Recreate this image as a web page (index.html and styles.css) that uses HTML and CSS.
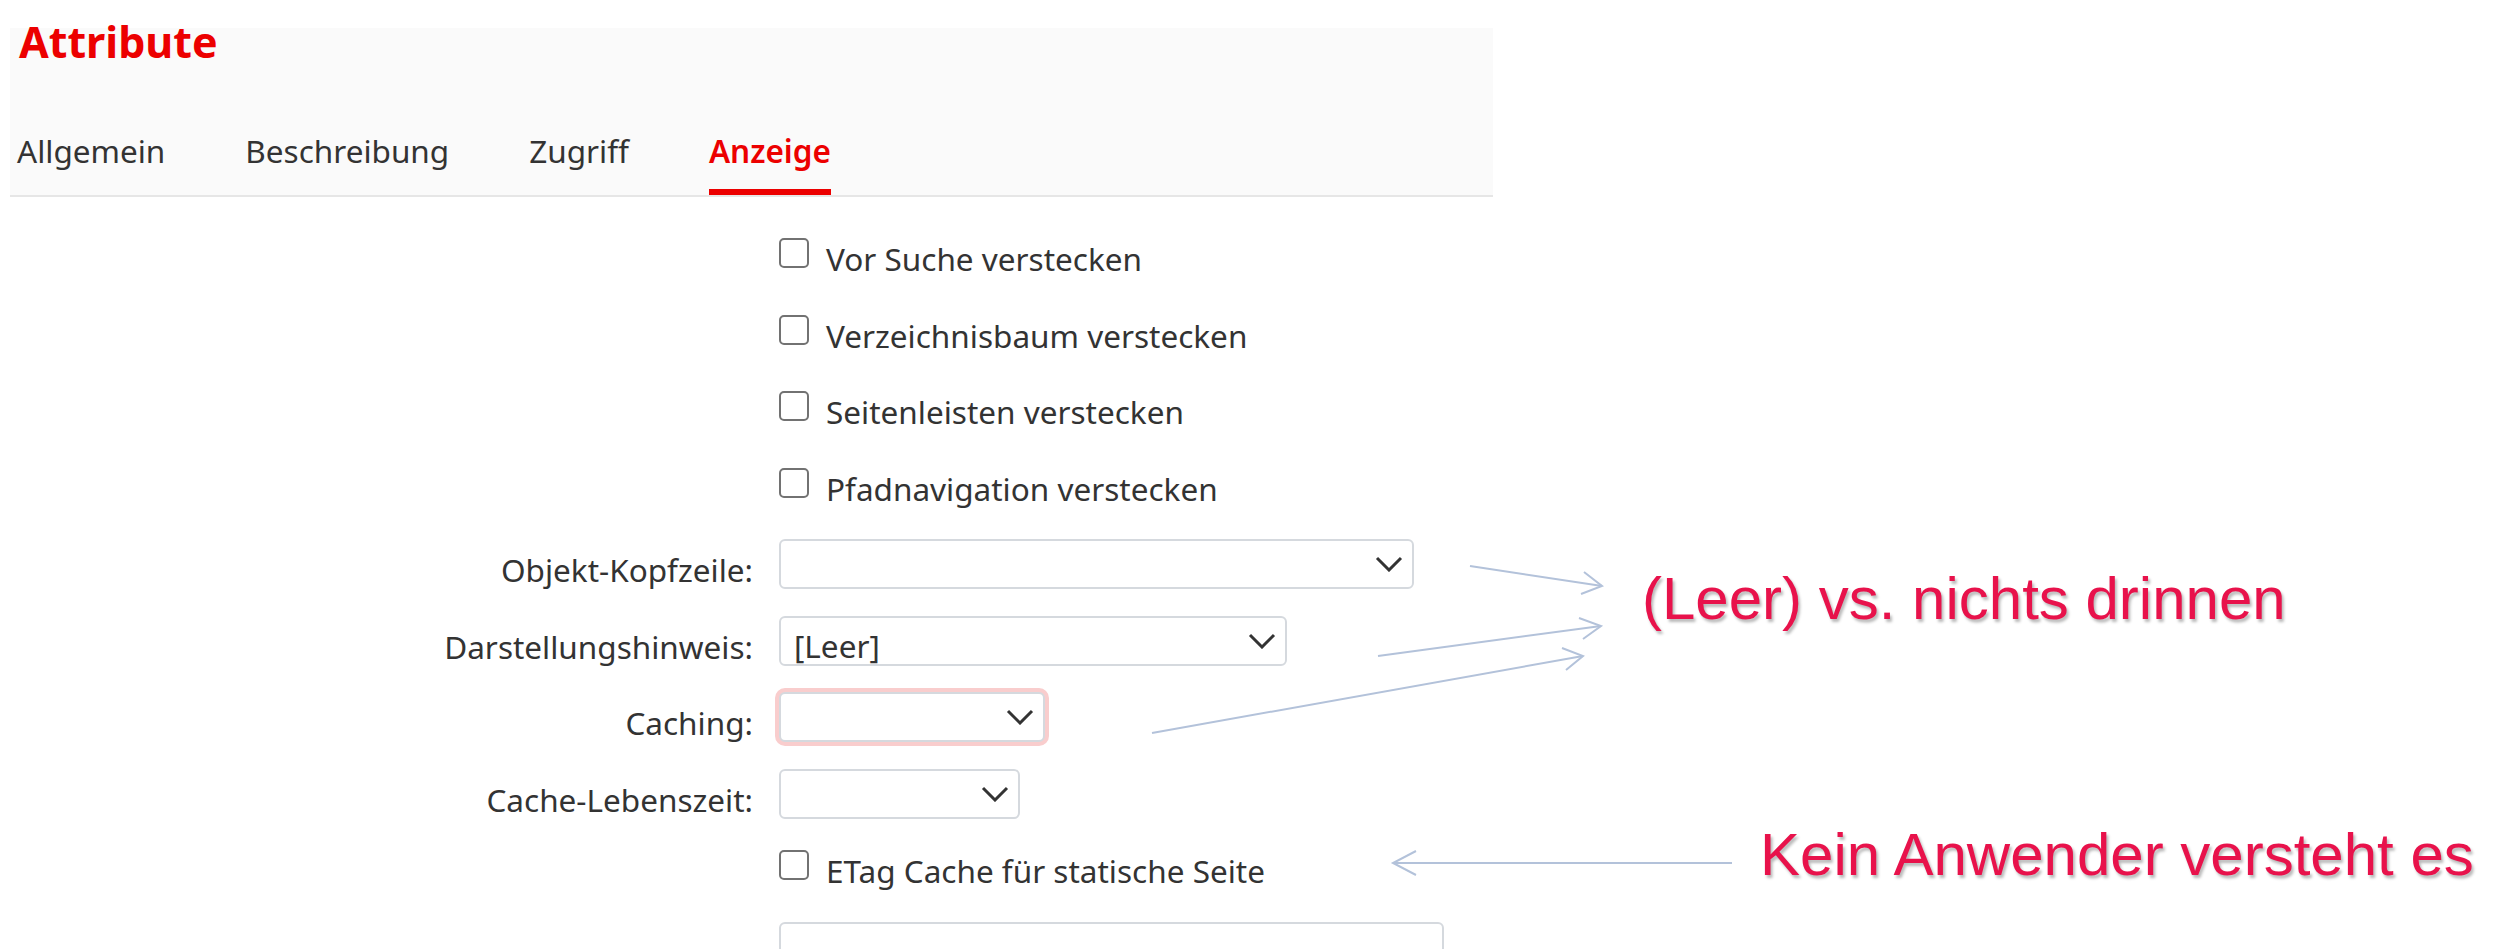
FILE: index.html
```html
<!doctype html>
<html>
<head>
<meta charset="utf-8">
<link rel="stylesheet" href="styles.css">
</head>
<body>
<div id="head">
	<h1>Attribute</h1>
	<div class="tabs">
		<span class="tab">Allgemein</span>
		<span class="tab">Beschreibung</span>
		<span class="tab">Zugriff</span>
		<span class="tab active">Anzeige</span>
	</div>
</div>

<div class="form">
	<label class="check"><input type="checkbox">Vor Suche verstecken</label>
	<label class="check"><input type="checkbox">Verzeichnisbaum verstecken</label>
	<label class="check"><input type="checkbox">Seitenleisten verstecken</label>
	<label class="check"><input type="checkbox">Pfadnavigation verstecken</label>

	<label class="lbl">Objekt-Kopfzeile:</label>
	<div class="select w1"><span></span><svg class="chev" viewBox="0 0 28 16"><polyline points="2,2 14,14 26,2"/></svg></div>

	<label class="lbl">Darstellungshinweis:</label>
	<div class="select w2"><span>[Leer]</span><svg class="chev" viewBox="0 0 28 16"><polyline points="2,2 14,14 26,2"/></svg></div>

	<label class="lbl">Caching:</label>
	<div class="select w3 invalid"><span></span><svg class="chev" viewBox="0 0 28 16"><polyline points="2,2 14,14 26,2"/></svg></div>

	<label class="lbl">Cache-Lebenszeit:</label>
	<div class="select w4"><span></span><svg class="chev" viewBox="0 0 28 16"><polyline points="2,2 14,14 26,2"/></svg></div>

	<label class="check"><input type="checkbox">ETag Cache für statische Seite</label>
	<div class="input"></div>
</div>

<!-- annotations drawn over the form -->
<svg id="arrows" width="2503" height="949">
	<g>
		<line x1="1470" y1="566" x2="1602" y2="586"/>
		<polyline points="1584,572 1602,586 1581,594"/>
		<line x1="1378" y1="656" x2="1601" y2="626"/>
		<polyline points="1579,618 1601,626 1583,639"/>
		<line x1="1152" y1="733" x2="1583" y2="656"/>
		<polyline points="1562,648 1583,656 1566,670"/>
		<line x1="1732" y1="863" x2="1393" y2="863"/>
		<polyline points="1416,851 1393,863 1416,875"/>
	</g>
</svg>
<div class="note n1">(Leer) vs. nichts drinnen</div>
<div class="note n2">Kein Anwender versteht es</div>
</body>
</html>
```

FILE: styles.css
```css
body{
	margin:0;
	font-family:"Noto Sans",sans-serif;
	font-size:31.5px;
	color:#333;
	background:#fff;
	position:relative;
	height:949px;
	overflow:hidden;
}
#head{
	display:flow-root;
	margin:28px 0 0 10px;
	width:1483px;
	box-sizing:border-box;
	padding-left:7px;
	background:#fafafa;
	border-bottom:2px solid #e6e6e6;
}
#head h1{
	margin:-8px 0 0 2px;
	font-size:43px;
	line-height:44px;
	font-weight:bold;
	color:#ec0000;
}
.tabs{
	display:flex;
	gap:80px;
	margin-top:65px;
}
.tab{
	line-height:44px;
	padding-bottom:16px;
	border-bottom:6px solid transparent;
}
.tab.active{
	color:#ec0000;
	font-weight:600;
	border-bottom-color:#ec0000;
}
.form{
	display:grid;
	grid-template-columns:743px 1fr;
	grid-auto-rows:50px;
	column-gap:26px;
	row-gap:26.5px;
	padding-left:10px;
	margin-top:36px;
}
.check{
	grid-column:2;
	display:flex;
	align-items:flex-start;
	padding-top:4px;
	line-height:44px;
	white-space:nowrap;
}
.check input{
	appearance:none;
	width:30px;
	height:30px;
	margin:1px 17px 0 0;
	border:2px solid #727272;
	border-radius:5px;
	background:#fff;
	box-sizing:border-box;
}
.lbl{
	grid-column:1;
	text-align:right;
	line-height:44px;
	padding-top:9px;
	white-space:nowrap;
}
.select{
	grid-column:2;
	display:flex;
	justify-content:space-between;
	align-items:flex-start;
	height:50px;
	box-sizing:border-box;
	border:2px solid #d5d9de;
	border-radius:6px;
	padding:0 9px 0 13px;
	background:#fff;
}
.select span{
	line-height:44px;
	margin-top:6px;
}
.chev{
	align-self:center;
	width:28px;
	height:16px;
	fill:none;
	stroke:#333;
	stroke-width:3;
}
.w1{ width:635px; }
.w2{ width:508px; }
.w3{ width:266px; }
.w4{ width:241px; }
.invalid{
	box-shadow:0 0 0 4px #f9cdcd;
}
.input{
	grid-column:2;
	width:665px;
	height:50px;
	box-sizing:border-box;
	border:2px solid #d5d9de;
	border-radius:6px;
}
#arrows{
	position:absolute;
	left:0;
	top:0;
	pointer-events:none;
}
#arrows g{
	fill:none;
	stroke:#b3c2da;
	stroke-width:2;
}
.note{
	position:absolute;
	font-family:"Liberation Sans",Arial,sans-serif;
	font-size:60px;
	line-height:60px;
	color:#e8124b;
	text-shadow:2px 3px 3px rgba(0,0,0,.28);
	white-space:nowrap;
}
.n1{ left:1642px; top:569px; }
.n2{ left:1760px; top:825px; }
```
